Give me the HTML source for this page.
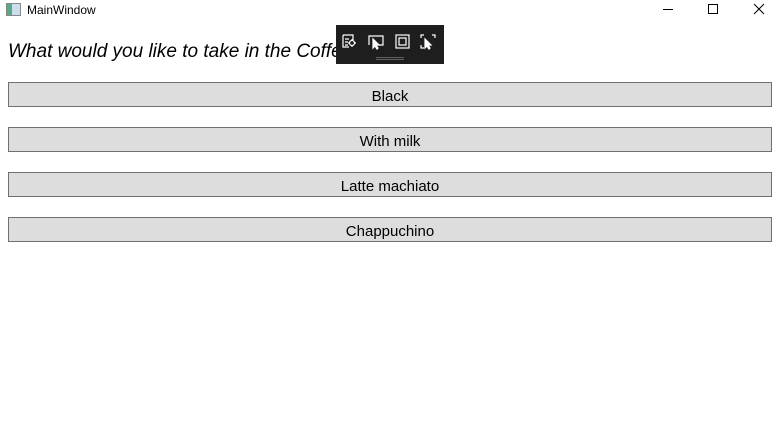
<!DOCTYPE html>
<html><head><style>
body{margin:0;width:779px;height:433px;background:#fff;position:relative;overflow:hidden;font-family:"Liberation Sans",sans-serif;}
.title{position:absolute;left:27px;top:3px;font-size:12px;color:#000;}
.ico{position:absolute;left:6px;top:3px;width:13px;height:11px;border:1px solid #888;background:linear-gradient(90deg,#5a8 0 40%,#cde 40%);}
.q{position:absolute;left:8px;top:41px;font-size:19px;font-style:italic;color:#000;}
.btn{position:absolute;left:8px;width:762px;height:23px;background:#ddd;border:1px solid #707070;text-align:center;font-size:15px;line-height:27px;color:#000;box-sizing:content-box;overflow:hidden;}
.tb{position:absolute;left:336px;top:25px;width:108px;height:39px;background:#1e1e1e;}
</style></head><body>
<div class="ico"></div>
<div class="title">MainWindow</div>
<svg style="position:absolute;left:640px;top:0" width="139" height="20">
<line x1="23" y1="9.5" x2="33" y2="9.5" stroke="#000"/>
<rect x="68.5" y="4.5" width="9" height="9" fill="none" stroke="#000"/>
<path d="M114 4 L124 14 M124 4 L114 14" stroke="#000"/>
</svg>
<div class="q">What would you like to take in the Coffee?</div>
<div class="tb">
<svg width="108" height="39" fill="none" stroke="#fff" stroke-width="1.2">
<path d="M7 10h10v5M7 10v12h6M9 14h4M9 17h3M9 20h3"/><circle cx="16" cy="18" r="2.5"/><path d="M16 14v1.5M16 20.5v1.5M12 18h1.5M18.5 18h1.5"/>
<path d="M33 20v-9h14v9h-4"/><path d="M37 14l0 9 2-2 2 3 1-1-2-3h3z" fill="#fff"/>
<rect x="60" y="10" width="13" height="13"/><rect x="63" y="13" width="7" height="7"/>
<path d="M85 13v-3h3M96 10h3v3M85 20v3h3"/><path d="M89 14l0 9 2-2 2 3 1-1-2-3h3z" fill="#fff"/>
<path d="M40 32.5h28M40 34.5h28" stroke="#777" stroke-width="0.8"/>
</svg></div>
<div class="btn" style="top:82px">Black</div>
<div class="btn" style="top:127px">With milk</div>
<div class="btn" style="top:172px">Latte machiato</div>
<div class="btn" style="top:217px">Chappuchino</div>
</body></html>
